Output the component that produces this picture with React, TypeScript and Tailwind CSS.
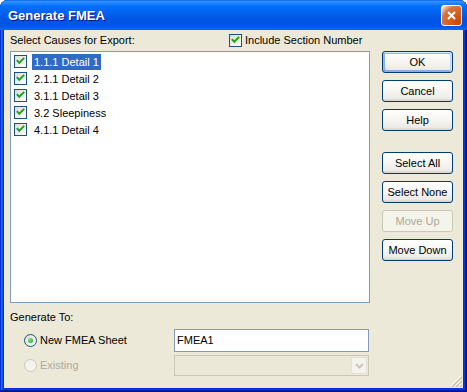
import React from "react";

const items = ["1.1.1 Detail 1", "2.1.1 Detail 2", "3.1.1 Detail 3", "3.2 Sleepiness", "4.1.1 Detail 4"];

function Check() {
  return (
    <span className="relative inline-block w-[13px] h-[13px] shrink-0 border border-[#1C5180] bg-[linear-gradient(135deg,#DCDCD7,#FFFFFF)]">
      <svg viewBox="0 0 11 11" className="absolute left-0 top-0 w-[11px] h-[11px]">
        <path d="M2.5 4.8 L4.3 6.8 L8.5 2.6" stroke="#21A121" strokeWidth="2" fill="none" strokeLinecap="square" />
      </svg>
    </span>
  );
}

function Radio({ on, disabled }: { on?: boolean; disabled?: boolean }) {
  return (
    <span
      className={
        "relative inline-flex items-center justify-center w-[13px] h-[13px] shrink-0 rounded-full border " +
        (disabled
          ? "border-[#CAC8BB] bg-[#F4F3EE]"
          : "border-[#1C5180] bg-[linear-gradient(135deg,#DCDCD7,#FFFFFF)]")
      }
    >
      {on && <span className="w-[5px] h-[5px] rounded-full bg-[radial-gradient(circle_at_35%_35%,#7BE37B,#21A121)]" />}
    </span>
  );
}

function Btn({ children, disabled, primary, className = "" }: { children: React.ReactNode; disabled?: boolean; primary?: boolean; className?: string }) {
  let cls = "h-[22px] w-[71px] rounded-[3px] border flex items-center justify-center text-[11px] leading-[13px] ";
  if (disabled) cls += "border-[#C9C7BA] text-[#ACA899] bg-[#F5F4EA] ";
  else cls += "border-[#003C74] text-black bg-[linear-gradient(180deg,#FFFFFF_0%,#F6F5F1_50%,#ECEBE6_86%,#D6D0C5_100%)] ";
  if (primary) cls += "shadow-[inset_-1px_1px_#CEE7FF,inset_1px_2px_#98B8EA,inset_-2px_2px_#BCD4F6,inset_1px_-1px_#89ADE4,inset_2px_-2px_#89ADE4] ";
  return <div className={cls + className}>{children}</div>;
}

export default function App() {
  return (
    <div className="w-[467px] h-[392px] bg-white font-['Liberation_Sans',Arial,sans-serif] text-[11px] text-black">
      <div className="w-[467px] h-[392px] flex flex-col rounded-t-[8px] bg-[#0831D9] shadow-[inset_-1px_-1px_#00138C,inset_1px_1px_#0831D9,inset_-2px_-2px_#001EA0,inset_2px_2px_#166AEE,inset_-3px_-3px_#003BDA,inset_3px_3px_#0855DD]">
        {/* title bar */}
        <div className="h-[30px] shrink-0 flex items-start rounded-t-[8px] bg-[linear-gradient(180deg,#0058EE_0%,#3A93FF_4%,#288EFF_8%,#127DFF_14%,#036FFC_22%,#0262EE_44%,#0057E5_60%,#0054E3_76%,#0055EB_86%,#005BF5_92%,#026AFE_96%,#0062EF_100%)]">
          <span className="pl-[8px] pt-[8px] leading-[16px] text-[13px] font-bold text-white [text-shadow:1px_1px_#0F1089]">Generate FMEA</span>
          <div className="ml-auto mr-[5px] mt-[5px] w-[21px] h-[21px] rounded-[3px] border border-white flex items-center justify-center bg-[radial-gradient(circle_at_90%_90%,#CC4600_0%,#DC6527_55%,#CD7546_70%,#FFCCB2_90%,#FFFFFF_100%)]">
            <svg viewBox="0 0 13 13" className="w-[13px] h-[13px]">
              <path d="M3 3 L10 10 M10 3 L3 10" stroke="white" strokeWidth="2" />
            </svg>
          </div>
        </div>

        {/* client area */}
        <div className="relative flex-1 mx-[4px] mb-[4px] bg-[#ECE9D8] pt-[4px]">
          <div className="flex">
            <div className="ml-[6px] w-[360px]">
              <div className="h-[17px] flex items-start">
                <span className="w-[219px] leading-[13px]">Select Causes for Export:</span>
                <Check />
                <span className="ml-[3px] leading-[13px]">Include Section Number</span>
              </div>
              <div className="h-[252px] border border-[#7F9DB9] bg-white pt-[1px]">
                {items.map((t, i) => (
                  <div key={t} className="h-[17px] flex items-center pl-[3px]">
                    <Check />
                    <span
                      className={
                        "ml-[5px] h-[16px] px-[2px] leading-[16px] " +
                        (i === 0 ? "bg-[#316AC5] text-white" : "")
                      }
                    >
                      {t}
                    </span>
                  </div>
                ))}
              </div>
            </div>

            <div className="ml-[12px] pt-[17px] flex flex-col gap-[7px]">
              <Btn primary>OK</Btn>
              <Btn>Cancel</Btn>
              <Btn>Help</Btn>
              <Btn className="mt-[14px]">Select All</Btn>
              <Btn>Select None</Btn>
              <Btn disabled>Move Up</Btn>
              <Btn>Move Down</Btn>
            </div>
          </div>

          <div className="mt-[8px] pl-[6px] leading-[13px]">Generate To:</div>

          <div className="mt-[5px] h-[23px] flex items-center">
            <div className="w-[170px] pl-[20px] flex items-center">
              <Radio on />
              <span className="ml-[3px] leading-[13px]">New FMEA Sheet</span>
            </div>
            <div className="w-[195px] h-[23px] border border-[#7F9DB9] bg-white pl-[2px] flex items-center">FMEA1</div>
          </div>

          <div className="mt-[3px] h-[21px] flex items-center">
            <div className="w-[170px] pl-[20px] flex items-center">
              <Radio disabled />
              <span className="ml-[3px] leading-[13px] text-[#ACA899]">Existing</span>
            </div>
            <div className="w-[195px] h-[21px] border border-[#C9C7BA] bg-[#EBE8D7] flex items-center justify-end pr-[1px]">
              <div className="w-[16px] h-[17px] rounded-[2px] border border-[#E3E1D6] bg-[#F4F3EE] flex items-center justify-center">
                <svg viewBox="0 0 9 6" className="w-[9px] h-[6px]">
                  <path d="M1 1 L4.5 4.5 L8 1" stroke="#C9C7BA" strokeWidth="2" fill="none" />
                </svg>
              </div>
            </div>
          </div>

          {/* resize grip */}
          <svg viewBox="0 0 12 12" className="absolute right-[1px] bottom-[1px] w-[12px] h-[12px]">
            <path d="M11 1 L1 11 M11 5 L5 11 M11 9 L9 11" stroke="#FFFFFF" strokeWidth="1" />
            <path d="M12 2 L2 12 M12 6 L6 12 M12 10 L10 12" stroke="#C1BDA8" strokeWidth="1.2" />
          </svg>
        </div>
      </div>
    </div>
  );
}
